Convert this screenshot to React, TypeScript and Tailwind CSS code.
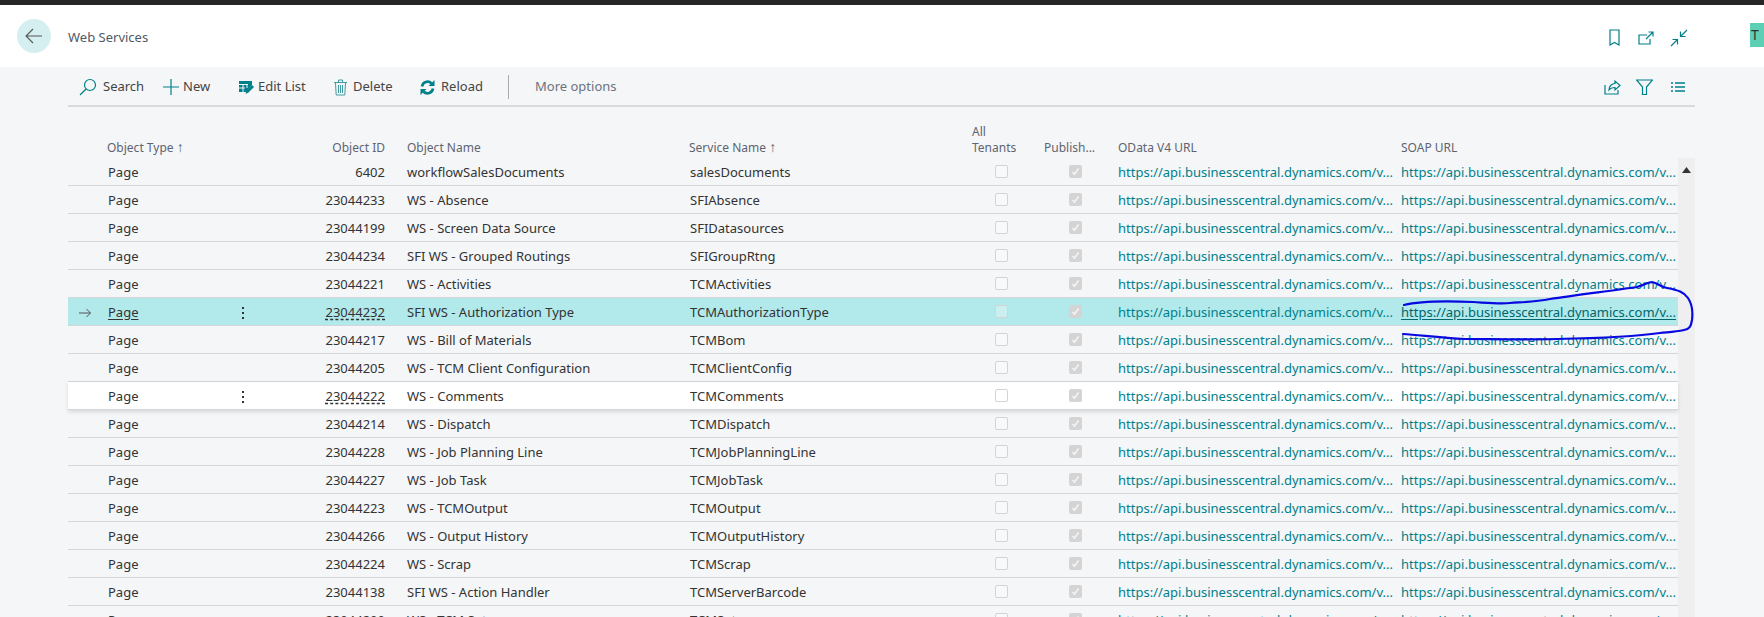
import { ReactNode } from 'react'

const URL_TEXT = 'https://api.businesscentral.dynamics.com/v...'

const rows = [
  { id: '6402', name: 'workflowSalesDocuments', service: 'salesDocuments' },
  { id: '23044233', name: 'WS - Absence', service: 'SFIAbsence' },
  { id: '23044199', name: 'WS - Screen Data Source', service: 'SFIDatasources' },
  { id: '23044234', name: 'SFI WS - Grouped Routings', service: 'SFIGroupRtng' },
  { id: '23044221', name: 'WS - Activities', service: 'TCMActivities' },
  { id: '23044232', name: 'SFI WS - Authorization Type', service: 'TCMAuthorizationType', mode: 'current' },
  { id: '23044217', name: 'WS - Bill of Materials', service: 'TCMBom' },
  { id: '23044205', name: 'WS - TCM Client Configuration', service: 'TCMClientConfig' },
  { id: '23044222', name: 'WS - Comments', service: 'TCMComments', mode: 'hover' },
  { id: '23044214', name: 'WS - Dispatch', service: 'TCMDispatch' },
  { id: '23044228', name: 'WS - Job Planning Line', service: 'TCMJobPlanningLine' },
  { id: '23044227', name: 'WS - Job Task', service: 'TCMJobTask' },
  { id: '23044223', name: 'WS - TCMOutput', service: 'TCMOutput' },
  { id: '23044266', name: 'WS - Output History', service: 'TCMOutputHistory' },
  { id: '23044224', name: 'WS - Scrap', service: 'TCMScrap' },
  { id: '23044138', name: 'SFI WS - Action Handler', service: 'TCMServerBarcode' },
  { id: '23044200', name: 'WS - TCM Setup', service: 'TCMSetup' },
]

const gridCols = 'grid grid-cols-[40px_120px_30px_149px_283px_270px_84px_62px_295px_277px]'

function Icon({ w, h, children, className, weight }: { w: number; h: number; children: ReactNode; className?: string; weight?: number }) {
  return (
    <svg width={w} height={h} viewBox={`0 0 ${w} ${h}`} fill="none" stroke="#00808a" strokeWidth={weight || 1.2} className={className}>
      {children}
    </svg>
  )
}

function ToolItem({ icon, label, className }: { icon: ReactNode; label: string; className?: string }) {
  return (
    <div className={`flex items-center ${className || ''}`}>
      {icon}
      <span>{label}</span>
    </div>
  )
}

function Checkbox({ checked }: { checked?: boolean }) {
  if (checked) {
    return (
      <div className="w-[13px] h-[13px] rounded-[2px] bg-[#d4d4d4] flex items-center justify-center">
        <svg width="9" height="9" viewBox="0 0 9 9" fill="none" stroke="#f4f4f4" strokeWidth="1.6">
          <path d="M1.5 5l2 2.2L7.5 1.5" />
        </svg>
      </div>
    )
  }
  return <div className="w-[13px] h-[13px] rounded-[2px] border border-[#d4d4d4] bg-white/30" />
}

function Dots() {
  return (
    <div className="flex flex-col gap-[3px] items-center">
      <span className="w-[2px] h-[2px] bg-[#333]" />
      <span className="w-[2px] h-[2px] bg-[#333]" />
      <span className="w-[2px] h-[2px] bg-[#333]" />
    </div>
  )
}

function HeaderCell({ children, className }: { children: ReactNode; className?: string }) {
  return <div className={`text-[12px] leading-[16px] text-[#5f6470] whitespace-nowrap ${className || ''}`}>{children}</div>
}

function Row({ row }: { row: (typeof rows)[number] }) {
  const current = row.mode === 'current'
  const hover = row.mode === 'hover'
  const bg = current ? 'bg-[#b2e9eb]' : hover ? 'bg-white shadow-[0_2px_4px_rgba(0,0,0,0.12)] relative' : ''
  const showDots = current || hover
  return (
    <div className={`${gridCols} h-[28px] shrink-0 items-center border-b border-[#d5d6da] box-border pt-[2px] text-[13px] text-[#333] ${bg}`}>
      <div className="pl-[11px] flex items-center">
        {current && (
          <svg width="12" height="10" viewBox="0 0 12 10" fill="none" stroke="#555" strokeWidth="1">
            <path d="M0 5h11.5M7.5 1l4 4-4 4" />
          </svg>
        )}
      </div>
      <div className={current ? 'underline underline-offset-2' : ''}>Page</div>
      <div className="flex justify-center">{showDots && <Dots />}</div>
      <div className="text-right pr-[22px]">
        <span className={showDots ? 'underline decoration-dashed underline-offset-2' : ''}>{row.id}</span>
      </div>
      <div className="whitespace-nowrap">{row.name}</div>
      <div className="whitespace-nowrap">{row.service}</div>
      <div className="flex justify-center pr-[2px] -mt-[2px]"><Checkbox /></div>
      <div className="flex justify-center -mt-[2px]"><Checkbox checked /></div>
      <div className="pl-3 whitespace-nowrap text-[#00808a]">{URL_TEXT}</div>
      <div className={`whitespace-nowrap ${current ? 'underline underline-offset-2 text-[#00656d]' : 'text-[#00808a]'}`}>{URL_TEXT}</div>
    </div>
  )
}

export default function App() {
  return (
    <div className="relative h-[617px] overflow-hidden bg-[#f5f6f8] font-['Noto_Sans','Open_Sans',sans-serif]">
      <div className="h-[5px] bg-[#262626]" />

      <header className="h-[62px] bg-white flex items-center pl-[17px] pr-[76px] relative">
        <div className="w-[34px] h-[34px] rounded-full bg-[#d5eef0] flex items-center justify-center">
          <svg width="18" height="16" viewBox="0 0 18 16" fill="none" stroke="#555" strokeWidth="1.1">
            <path d="M17 8H1M8 1L1 8l7 7" />
          </svg>
        </div>
        <h1 className="ml-[17px] text-[13px] text-[#505a68] mt-[4px]">Web Services</h1>
        <div className="ml-auto flex items-center mt-[3px]">
          <Icon w={11} h={17}>
            <path d="M1 1h9v15l-4.5-2.5L1 16z" />
          </Icon>
          <Icon w={16} h={14} className="ml-[18px]">
            <path d="M9 4H1v9h11V8M8 8l7-7M10.5 1H15v4.5" />
          </Icon>
          <Icon w={18} h={18} className="ml-[16px]">
            <path d="M17 1l-6.5 6.5M10.5 2.5v5h5M1 17l6.5-6.5M7.5 15.5v-5h-5" />
          </Icon>
        </div>
        <div className="absolute right-0 top-[18px] w-[14px] h-[24px] bg-[#5ccfb5] text-[14px] leading-[24px] pl-[1px] text-[#333] overflow-hidden">T</div>
      </header>

      <div className="ml-[68px] w-[1627px] h-[40px] border-b-2 border-[#d9dadd] flex items-center pl-[11px] pt-[2px] text-[13px] text-[#444]">
        <ToolItem
          label="Search"
          className="w-[84px]"
          icon={
            <Icon w={18} h={18} className="mr-[6px]">
              <circle cx="11" cy="7" r="5.5" />
              <path d="M7 11l-6 6" />
            </Icon>
          }
        />
        <ToolItem
          label="New"
          className="w-[76px]"
          icon={
            <Icon w={16} h={16} className="mr-[4px]">
              <path d="M8 0v16M0 8h16" />
            </Icon>
          }
        />
        <ToolItem
          label="Edit List"
          className="w-[95px]"
          icon={
            <svg width="15" height="15" viewBox="0 0 15 15" className="mr-[4px]">
              <path d="M0 1h13v4l-6 7H0z" fill="#00808a" />
              <path d="M0 4.5h9M0 8h6M4 4.5V12M8 4.5V8" stroke="#f5f6f8" strokeWidth="1" />
              <path d="M6.5 14l1-3.5 5.5-5.5 2 2-5.5 5.5z" fill="#00808a" />
            </svg>
          }
        />
        <ToolItem
          label="Delete"
          className="w-[86px]"
          icon={
            <svg width="13" height="17" viewBox="0 0 13 17" fill="none" stroke="#3f9aa2" strokeWidth="1" className="mr-[6px]">
              <path d="M0 3.5h13M4.5 3V1h4v2M1.5 4l.7 12h8.6l.7-12M4.5 6v8M6.5 6v8M8.5 6v8" />
            </svg>
          }
        />
        <ToolItem
          label="Reload"
          className="w-[88px]"
          icon={
            <svg width="15" height="15" viewBox="0 0 15 15" fill="none" stroke="#00808a" strokeWidth="2.6" className="mr-[6px]">
              <path d="M2 6.5A5.5 5.5 0 0 1 11.5 3.5" />
              <path d="M13 8.5A5.5 5.5 0 0 1 3.5 11.5" />
              <path d="M14.5 0v6h-6zM.5 15V9h6z" fill="#00808a" stroke="none" />
            </svg>
          }
        />
        <div className="w-px h-[24px] bg-[#a9abb0]" />
        <span className="ml-[26px] text-[#6b7280]">More options</span>
        <div className="ml-auto mr-[10px] flex items-center">
          <Icon w={17} h={16}>
            <path d="M1 6v9h13v-4M5 11c0-4 3-6.500 6-6.500V2l5 4.500-5 4.500V8.500c-2.500 0-4.500 .5-6 2.500z" />
          </Icon>
          <Icon w={17} h={16} className="ml-[15px]">
            <path d="M.5 1h16L10.500 8v7.500h-4V8z" />
          </Icon>
          <Icon w={14} h={10} weight={1.5} className="ml-[18px]">
            <path d="M0 1h2M4 1h10M0 5h2M4 5h10M0 9h2M4 9h10" />
          </Icon>
        </div>
      </div>

      <div className="ml-[68px] w-[1610px] h-[51px]">
        <div className={`${gridCols} h-[51px] items-end pb-[2px]`}>
          <div />
          <HeaderCell className="-ml-px">Object Type <span className="text-[14px] leading-[14px]">↑</span></HeaderCell>
          <div />
          <HeaderCell className="text-right pr-[22px]">Object ID</HeaderCell>
          <HeaderCell>Object Name</HeaderCell>
          <HeaderCell className="-ml-px">Service Name <span className="text-[14px] leading-[14px]">↑</span></HeaderCell>
          <HeaderCell className="pl-3 whitespace-normal">All<br />Tenants</HeaderCell>
          <HeaderCell>Publish...</HeaderCell>
          <HeaderCell className="pl-3">OData V4 URL</HeaderCell>
          <HeaderCell>SOAP URL</HeaderCell>
        </div>
      </div>

      <div className="flex ml-[68px] w-[1627px]">
        <div className="w-[1610px] flex flex-col">
          {rows.map((row) => (
            <Row key={row.id} row={row} />
          ))}
        </div>
        <div className="w-[17px] h-[459px] bg-[#efefef] flex justify-center pt-[9px]">
          <svg width="9" height="6" viewBox="0 0 9 6">
            <path d="M4.500 0L9 6H0z" fill="#333" />
          </svg>
        </div>
      </div>

      {/* blue pen mark round the SOAP URL */}
      <svg width="310" height="70" viewBox="1390 275 310 70" fill="none" className="absolute left-[1390px] top-[275px]">
        <path
          d="M1404 305C1420 301 1450 301 1473 302C1490 303 1500 304 1510 303C1525 302 1535 302 1550 299C1575 295 1610 291 1637 287C1645 285 1648 282 1652 282C1658 283 1660 287 1667 288C1678 290 1684 292 1688 298C1692 304 1693 312 1692 320C1691 326 1690 329 1684 330C1675 332 1670 332 1660 333C1640 336 1610 338 1557 339C1520 340 1490 339 1465 339C1440 338 1420 335 1403 334"
          stroke="#0808e0"
          strokeWidth="2.2"
          strokeLinecap="round"
        />
      </svg>
    </div>
  )
}
